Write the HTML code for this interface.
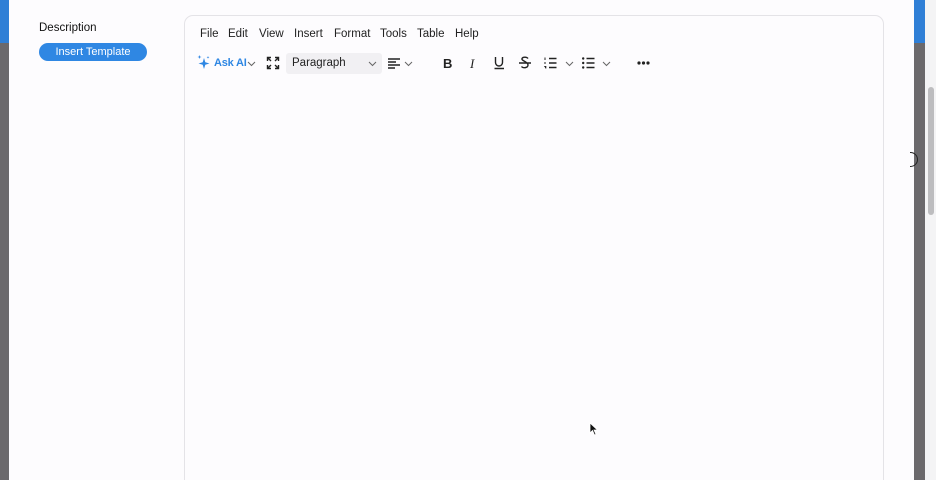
<!DOCTYPE html>
<html style="overflow:hidden;height:480px"><head><style>
*{margin:0;padding:0;box-sizing:border-box}
body{width:936px;height:480px;overflow:hidden;background:#fdfcfe;font-family:"Liberation Sans",sans-serif;position:relative;color:#222}
.a{position:absolute}
.menu span{position:absolute;top:28px;font-size:11.5px;color:#222}
svg{position:absolute;overflow:visible}
</style></head><body>
<div class="a" style="left:0;top:0;width:9px;height:480px;background:#6b696c"></div>
<div class="a" style="left:0;top:0;width:9px;height:43px;background:#2f7fd6"></div>
<div class="a" style="left:914px;top:0;width:11px;height:480px;background:#6b696c"></div>
<div class="a" style="left:914px;top:0;width:11px;height:43px;background:#2f7fd6"></div>
<div class="a" style="left:925px;top:0;width:11px;height:480px;background:#f4f4f5"></div>
<div class="a" style="left:928px;top:87px;width:6px;height:128px;border-radius:3px;background:#bdbdbf"></div>
<div class="a" style="left:910px;top:152px;width:8px;height:15px;border:1px solid #222;border-left:none;border-radius:0 8px 8px 0"></div>
<div class="a" style="left:39px;top:22px;font-size:11.5px;color:#111">Description</div>
<div class="a" style="left:39px;top:43px;width:108px;height:18px;border-radius:9px;background:#2f87e3;color:#fff;font-size:11px;text-align:center;line-height:18px">Insert Template</div>
<div class="a" style="left:184px;top:15px;width:700px;height:480px;border:1.5px solid #e4e3e7;border-radius:9px;background:#fdfcfe"></div>
<div class="menu">
<span style="left:200px">File</span><span style="left:228px">Edit</span><span style="left:259px">View</span><span style="left:294px">Insert</span><span style="left:334px">Format</span><span style="left:380px">Tools</span><span style="left:417px">Table</span><span style="left:455px">Help</span>
</div>
<svg style="left:197px;top:55px" width="14" height="15" viewBox="0 0 14 15"><path d="M7 3 L8.3 7.2 L12.5 8.5 L8.3 9.8 L7 14 L5.7 9.8 L1.5 8.5 L5.7 7.2Z" fill="#2f87e3"/><path d="M2.5 0 L3 1.5 L4.5 2 L3 2.5 L2.5 4 L2 2.5 L0.5 2 L2 1.5Z" fill="#2f87e3"/><path d="M11 1 L11.4 2 L12.4 2.4 L11.4 2.8 L11 3.8 L10.6 2.8 L9.6 2.4 L10.6 2Z" fill="#2f87e3"/></svg>
<div class="a" style="left:214px;top:57px;font-size:11px;font-weight:bold;color:#2f87e3;letter-spacing:-0.2px">Ask AI</div>
<svg style="left:247px;top:61px" width="9" height="6"><path d="M1 1 L4.5 4.5 L8 1" stroke="#666" fill="none"/></svg>
<svg style="left:267px;top:57px" width="12" height="12"><path d="M0.5 4V0.5H4M8 0.5H11.5V4M11.5 8V11.5H8M4 11.5H0.5V8M1 1L4 4M11 1L8 4M11 11L8 8M1 11L4 8" stroke="#222" stroke-width="1.4" fill="none"/></svg>
<div class="a" style="left:286px;top:53px;width:96px;height:21px;background:#f1f0f3;border-radius:3px"></div>
<div class="a" style="left:292px;top:57px;font-size:11.5px;color:#222">Paragraph</div>
<svg style="left:368px;top:61px" width="9" height="6"><path d="M1 1 L4.5 4.5 L8 1" stroke="#666" fill="none"/></svg>
<svg style="left:388px;top:58px" width="13" height="11"><path d="M0 1H12M0 4H8M0 7H12M0 10H7" stroke="#222" stroke-width="1.4"/></svg>
<svg style="left:404px;top:61px" width="9" height="6"><path d="M1 1 L4.5 4.5 L8 1" stroke="#666" fill="none"/></svg>
<div class="a" style="left:443px;top:56px;font-size:13px;font-weight:bold;color:#222">B</div>
<div class="a" style="left:470px;top:56px;font-size:13px;font-style:italic;font-family:'Liberation Serif',serif;color:#222">I</div>
<svg style="left:494px;top:57px" width="11" height="13"><path d="M1.5 0V5.5A3.5 3.5 0 0 0 8.5 5.5V0M0.5 11.5H10" stroke="#222" stroke-width="1.4" fill="none"/></svg>
<svg style="left:519px;top:56px" width="12" height="14"><path d="M9 2.5C8 1 4 0.5 3 2.5C2 5 9 5.5 9 9C9 12 4 12.5 2.5 10.5M0 7H12" stroke="#222" stroke-width="1.4" fill="none"/></svg>
<svg style="left:544px;top:57px" width="13" height="12"><path d="M5 1.5H12.5M5 6H12.5M5 10.5H12.5" stroke="#222" stroke-width="1.4"/><path d="M1 0.5V3M1 5V7M0.3 9.5H1.8V11.5" stroke="#222" stroke-width="1"/></svg>
<svg style="left:565px;top:61px" width="9" height="6"><path d="M1 1 L4.5 4.5 L8 1" stroke="#666" fill="none"/></svg>
<svg style="left:582px;top:57px" width="13" height="12"><path d="M4.5 1.5H12.5M4.5 6H12.5M4.5 10.5H12.5" stroke="#222" stroke-width="1.4"/><circle cx="1.2" cy="1.5" r="1.2" fill="#222"/><circle cx="1.2" cy="6" r="1.2" fill="#222"/><circle cx="1.2" cy="10.5" r="1.2" fill="#222"/></svg>
<svg style="left:602px;top:61px" width="9" height="6"><path d="M1 1 L4.5 4.5 L8 1" stroke="#666" fill="none"/></svg>
<svg style="left:637px;top:61px" width="13" height="4"><circle cx="2" cy="2" r="1.6" fill="#222"/><circle cx="6.5" cy="2" r="1.6" fill="#222"/><circle cx="11" cy="2" r="1.6" fill="#222"/></svg>
<svg style="left:589px;top:422px" width="9" height="14"><path d="M1 1V11L3.5 8.5L5.5 13L7 12.3L5 8H8.5Z" fill="#111" stroke="#fff" stroke-width="0.8"/></svg>
</body></html>
